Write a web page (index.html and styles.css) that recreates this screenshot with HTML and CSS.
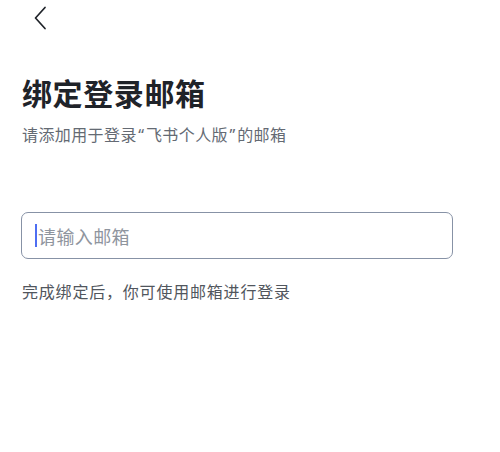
FILE: index.html
```html
<!DOCTYPE html>
<html lang="zh-CN">
<head>
<meta charset="utf-8">
<title>绑定登录邮箱</title>
<link rel="stylesheet" href="styles.css">
</head>
<body>
<div class="page">
  <div class="nav">
    <svg class="back" width="14" height="24" viewBox="0 0 14 24" aria-hidden="true">
      <path d="M12 1.5 L2.5 12 L12 22.5" fill="none" stroke="#1f2329" stroke-width="1.7" stroke-linecap="round" stroke-linejoin="round"/>
    </svg>
  </div>
  <main class="content">
    <h1 class="title">绑定登录邮箱</h1>
    <p class="subtitle">请添加用于登录<span class="q">“</span>飞书个人版<span class="q">”</span>的邮箱</p>
    <div class="field">
      <span class="caret"></span>
      <span class="placeholder">请输入邮箱</span>
    </div>
    <p class="hint">完成绑定后，你可使用邮箱进行登录</p>
  </main>
</div>
</body>
</html>
```

FILE: styles.css
```css
* { box-sizing: border-box; }
html, body {
  margin: 0;
  padding: 0;
  background: #ffffff;
}
body {
  font-family: "Noto Sans CJK SC", "Noto Sans", sans-serif;
  color: #1f2329;
}
.page {
  width: 500px;
  height: 452px;
}
.nav {
  height: 36px;
  padding: 6px 0 0 33px;
  display: flex;
  align-items: flex-start;
}
.back {
  display: block;
}
.content {
  padding: 0 47px 0 21px;
}
.title {
  margin: 36px 0 0 1px;
  font-size: 30px;
  line-height: 40px;
  font-weight: 700;
  color: #1f2329;
  letter-spacing: 0.6px;
}
.subtitle {
  margin: 11px 0 0 1px;
  font-size: 16px;
  line-height: 22px;
  color: #646a73;
  letter-spacing: 0.4px;
}
.q {
  font-family: "Noto Sans", "DejaVu Sans", sans-serif;
  margin: 0 1.5px;
}
.field {
  margin-top: 66px;
  height: 47px;
  border: 1.5px solid #8792a6;
  border-radius: 7px;
  display: flex;
  align-items: center;
  padding-left: 13px;
}
.caret {
  width: 2px;
  height: 23px;
  background: #4e6ef2;
  margin-right: 1px;
}
.placeholder {
  font-size: 18px;
  line-height: 24px;
  color: #8f959e;
  letter-spacing: 0.4px;
}
.hint {
  margin: 21px 0 0 1px;
  font-size: 16px;
  line-height: 22px;
  color: #51565d;
  letter-spacing: 0.8px;
}
```
